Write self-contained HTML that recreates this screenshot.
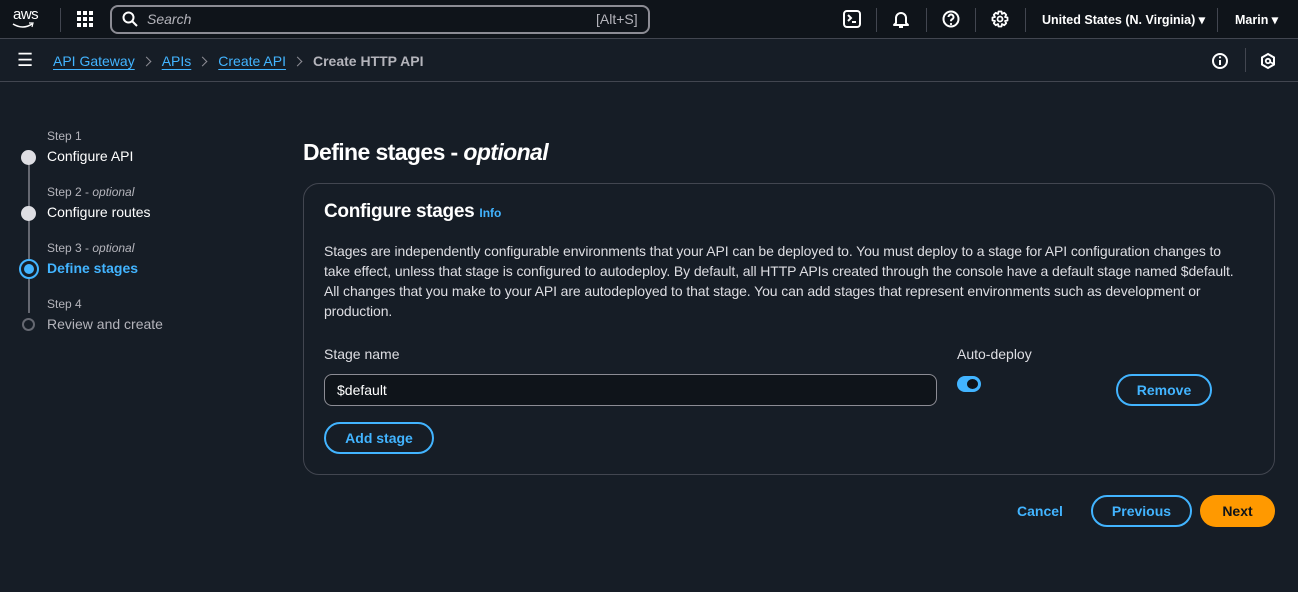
<!DOCTYPE html>
<html><head><meta charset="utf-8"><style>
*{box-sizing:border-box;margin:0;padding:0}
body{width:1298px;height:592px;background:#161d26;color:#dedee3;font-family:"Liberation Sans",sans-serif;font-size:14px;position:relative;overflow:hidden}
.abs{position:absolute}
.top{left:0;top:0;width:1298px;height:39px;background:#0f141a;border-bottom:1px solid #424650}
.bc{left:0;top:40px;width:1298px;height:42px;border-bottom:1px solid #424650;background:#161d26}
a{color:#42b4ff;text-decoration:underline;text-underline-offset:3px}
.sep{width:1px;height:24px;background:#424650;top:8px}
.btn{border:2px solid #42b4ff;border-radius:16px;color:#42b4ff;font-weight:bold;text-align:center;height:32px;line-height:28px}
.small{font-size:12px;color:#b4b4bb}
.chev{display:inline-block;width:7px;height:7px;border-right:1.5px solid #8c8c94;border-top:1.5px solid #8c8c94;transform:rotate(45deg);margin:0 12px 1px 8px}
</style></head><body>
<div class="abs top"></div>
<div class="abs" style="left:13px;top:6px;font-size:15px;color:#fff;letter-spacing:-0.5px">aws</div>
<svg class="abs" style="left:12px;top:22px" width="24" height="8"><path d="M1 2 Q11 8 20 2" stroke="#fff" stroke-width="1.6" fill="none"/><path d="M17 1 L21 1 L20 5" stroke="#fff" stroke-width="1.2" fill="none"/></svg>
<div class="abs sep" style="left:60px"></div>
<svg class="abs" style="left:77px;top:11px" width="16" height="16" fill="#fff"><rect x="0" y="0" width="4" height="4"/><rect x="6" y="0" width="4" height="4"/><rect x="12" y="0" width="4" height="4"/><rect x="0" y="6" width="4" height="4"/><rect x="6" y="6" width="4" height="4"/><rect x="12" y="6" width="4" height="4"/><rect x="0" y="12" width="4" height="4"/><rect x="6" y="12" width="4" height="4"/><rect x="12" y="12" width="4" height="4"/></svg>
<div class="abs" style="left:110px;top:5px;width:540px;height:29px;border:2px solid #8c8c94;border-radius:8px;background:#0f141a"></div>
<svg class="abs" style="left:122px;top:11px" width="16" height="16"><circle cx="6.5" cy="6.5" r="5" stroke="#fff" stroke-width="2" fill="none"/><path d="M10 10 L15 15" stroke="#fff" stroke-width="2"/></svg>
<div class="abs" style="left:147px;top:11px;font-style:italic;color:#b4b4bb">Search</div>
<div class="abs" style="left:596px;top:11px;color:#b4b4bb">[Alt+S]</div>
<svg class="abs" style="left:843px;top:10px" width="18" height="18"><rect x="1" y="1" width="16" height="16" rx="3" stroke="#fff" stroke-width="2" fill="none"/><path d="M5 5 L8 8 L5 11 M9 12 H13" stroke="#fff" stroke-width="2" fill="none"/></svg>
<div class="abs sep" style="left:876px"></div>
<svg class="abs" style="left:892px;top:10px" width="18" height="18"><path d="M4 13 V8 a5 5 0 0 1 10 0 V13 L16 15 H2 Z" stroke="#fff" stroke-width="2" fill="none" stroke-linejoin="round"/><path d="M7 17 H11" stroke="#fff" stroke-width="2"/></svg>
<div class="abs sep" style="left:926px"></div>
<svg class="abs" style="left:942px;top:10px" width="18" height="18"><circle cx="9" cy="9" r="7.5" stroke="#fff" stroke-width="2" fill="none"/><path d="M6.5 7 a2.5 2.5 0 1 1 3.5 2.3 c-1 .5-1 1-1 2" stroke="#fff" stroke-width="2" fill="none"/><circle cx="9" cy="14" r="1.1" fill="#fff"/></svg>
<div class="abs sep" style="left:975px"></div>
<svg class="abs" style="left:991px;top:10px" width="18" height="18"><path d="M7.5 1.5 H10.5 L11 4 L13.2 2.8 L15.2 4.8 L14 7 L16.5 7.5 V10.5 L14 11 L15.2 13.2 L13.2 15.2 L11 14 L10.5 16.5 H7.5 L7 14 L4.8 15.2 L2.8 13.2 L4 11 L1.5 10.5 V7.5 L4 7 L2.8 4.8 L4.8 2.8 L7 4 Z" stroke="#fff" stroke-width="1.8" fill="none" stroke-linejoin="round"/><circle cx="9" cy="9" r="2.5" stroke="#fff" stroke-width="1.8" fill="none"/></svg>
<div class="abs sep" style="left:1025px"></div>
<div class="abs" style="left:1042px;top:12px;font-size:12.5px;font-weight:bold;color:#fff">United States (N. Virginia) ▾</div>
<div class="abs sep" style="left:1217px"></div>
<div class="abs" style="left:1235px;top:12px;font-size:12.5px;font-weight:bold;color:#fff">Marin ▾</div>

<div class="abs bc"></div>
<div class="abs" style="left:17px;top:50px;font-size:18px;color:#fff">☰</div>
<div class="abs" style="left:53px;top:53px"><a>API Gateway</a><span class="chev"></span><a>APIs</a><span class="chev"></span><a>Create API</a><span class="chev"></span><span style="color:#b4b4bb;font-weight:bold">Create HTTP API</span></div>
<svg class="abs" style="left:1211px;top:52px" width="18" height="18"><circle cx="9" cy="9" r="7" stroke="#fff" stroke-width="2" fill="none"/><path d="M9 8 V13" stroke="#fff" stroke-width="2"/><circle cx="9" cy="5.3" r="1.1" fill="#fff"/></svg>
<div class="abs" style="left:1245px;top:48px;width:1px;height:24px;background:#424650"></div>
<svg class="abs" style="left:1259px;top:52px" width="18" height="18"><path d="M9 2 L15 5.5 V12.5 L9 16 L3 12.5 V5.5 Z" stroke="#fff" stroke-width="2" fill="none"/><circle cx="9" cy="9" r="2.2" stroke="#fff" stroke-width="1.8" fill="none"/><path d="M11 10 L15 12" stroke="#fff" stroke-width="1.8"/></svg>

<div class="abs" style="left:28px;top:163px;width:2px;height:150px;background:#656871"></div>
<div class="abs" style="left:21px;top:150px;width:15px;height:15px;border-radius:50%;background:#dedee3"></div>
<div class="abs" style="left:21px;top:206px;width:15px;height:15px;border-radius:50%;background:#dedee3"></div>
<div class="abs" style="left:19px;top:259px;width:20px;height:20px;border-radius:50%;border:2px solid #42b4ff;background:#161d26"></div>
<div class="abs" style="left:24px;top:264px;width:10px;height:10px;border-radius:50%;background:#42b4ff"></div>
<div class="abs" style="left:22px;top:318px;width:13px;height:13px;border-radius:50%;border:2px solid #656871;background:#161d26"></div>
<div class="abs small" style="left:47px;top:129px">Step 1</div>
<div class="abs" style="left:47px;top:148px;color:#fff">Configure API</div>
<div class="abs small" style="left:47px;top:185px">Step 2 - <i>optional</i></div>
<div class="abs" style="left:47px;top:204px;color:#fff">Configure routes</div>
<div class="abs small" style="left:47px;top:241px">Step 3 - <i>optional</i></div>
<div class="abs" style="left:47px;top:260px;color:#42b4ff;font-weight:bold">Define stages</div>
<div class="abs small" style="left:47px;top:297px">Step 4</div>
<div class="abs" style="left:47px;top:316px;color:#b4b4bb">Review and create</div>

<div class="abs" style="left:303px;top:139px;font-size:23px;font-weight:bold;color:#fff;letter-spacing:-0.6px">Define stages - <i>optional</i></div>
<div class="abs" style="left:303px;top:183px;width:972px;height:292px;border:1px solid #424650;border-radius:16px;background:#161d26"></div>
<div class="abs" style="left:324px;top:201px;font-size:19px;font-weight:bold;color:#fff;letter-spacing:-0.3px">Configure stages <span style="font-size:12px;color:#42b4ff;letter-spacing:0">Info</span></div>
<div class="abs" style="left:324px;top:241px;width:910px;line-height:20px;color:#dedee3;letter-spacing:-0.1px">Stages are independently configurable environments that your API can be deployed to. You must deploy to a stage for API configuration changes to take effect, unless that stage is configured to autodeploy. By default, all HTTP APIs created through the console have a default stage named $default. All changes that you make to your API are autodeployed to that stage. You can add stages that represent environments such as development or production.</div>
<div class="abs" style="left:324px;top:346px">Stage name</div>
<div class="abs" style="left:957px;top:346px">Auto-deploy</div>
<div class="abs" style="left:324px;top:374px;width:613px;height:32px;border:1px solid #8c8c94;border-radius:8px;background:#0f141a;padding:7px 12px;color:#fff">$default</div>
<div class="abs" style="left:957px;top:376px;width:24px;height:16px;border-radius:8px;background:#42b4ff"></div>
<div class="abs" style="left:967px;top:379px;width:11px;height:10px;border-radius:50%;background:#0f141a"></div>
<div class="abs btn" style="left:1116px;top:374px;width:96px">Remove</div>
<div class="abs btn" style="left:324px;top:422px;width:110px">Add stage</div>
<div class="abs" style="left:1017px;top:503px;color:#42b4ff;font-weight:bold">Cancel</div>
<div class="abs btn" style="left:1091px;top:495px;width:101px">Previous</div>
<div class="abs" style="left:1200px;top:495px;width:75px;height:32px;border-radius:16px;background:#ff9900;color:#0f141a;font-weight:bold;text-align:center;line-height:32px">Next</div>
</body></html>
